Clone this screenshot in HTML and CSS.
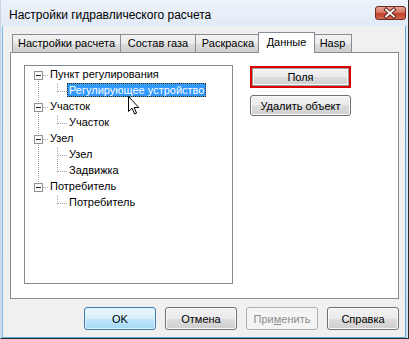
FILE: index.html
```html
<!DOCTYPE html>
<html>
<head>
<meta charset="utf-8">
<link rel="stylesheet" href="styles.css">
</head>
<body>
<svg class="defs" width="0" height="0">
  <defs>
    <symbol id="box" viewBox="0 0 19 16">
      <rect x="5.5" y="4.5" width="8" height="8" fill="#fdfdfd" stroke="#919191"/>
      <line x1="7" y1="8.5" x2="12" y2="8.5" stroke="#1a1a1a"/>
      <line x1="14" y1="8.5" x2="19" y2="8.5" stroke="#a0a0a0" stroke-dasharray="1 1"/>
    </symbol>
    <symbol id="up" viewBox="0 0 19 16">
      <line x1="9.5" y1="0" x2="9.5" y2="4" stroke="#a0a0a0" stroke-dasharray="1 1"/>
    </symbol>
    <symbol id="down" viewBox="0 0 19 16">
      <line x1="9.5" y1="14" x2="9.5" y2="16" stroke="#a0a0a0" stroke-dasharray="1 1"/>
    </symbol>
    <symbol id="pipe" viewBox="0 0 19 16">
      <line x1="9.5" y1="0" x2="9.5" y2="16" stroke="#a0a0a0" stroke-dasharray="1 1"/>
    </symbol>
    <symbol id="elbow" viewBox="0 0 19 16">
      <line x1="9.5" y1="0" x2="9.5" y2="9" stroke="#a0a0a0" stroke-dasharray="1 1"/>
      <line x1="10" y1="8.5" x2="19" y2="8.5" stroke="#a0a0a0" stroke-dasharray="1 1"/>
    </symbol>
    <symbol id="tee" viewBox="0 0 19 16">
      <line x1="9.5" y1="0" x2="9.5" y2="16" stroke="#a0a0a0" stroke-dasharray="1 1"/>
      <line x1="10" y1="8.5" x2="19" y2="8.5" stroke="#a0a0a0" stroke-dasharray="1 1"/>
    </symbol>
  </defs>
</svg>

<div class="window">
  <div class="titlebar">
    <span class="title">Настройки гидравлического расчета</span>
    <div class="close">
      <svg width="31" height="14" viewBox="0 0 31 14">
        <path d="M11.5 3.5 L19.5 10.5 M19.5 3.5 L11.5 10.5" stroke="#5a1e16" stroke-width="4" stroke-linecap="square"/>
        <path d="M11.5 3.5 L19.5 10.5 M19.5 3.5 L11.5 10.5" stroke="#ffffff" stroke-width="2" stroke-linecap="square"/>
      </svg>
    </div>
  </div>

  <div class="client">
    <div class="tabs">
      <div class="tab t1">Настройки расчета</div>
      <div class="tab t2">Состав газа</div>
      <div class="tab t3">Раскраска</div>
      <div class="tab active t4">Данные</div>
      <div class="tab t5">Hasp</div>
    </div>
    <div class="pane">
      <div class="tree">
        <div class="row">
          <svg class="cell"><use href="#box"/><use href="#down"/></svg>
          <span class="label">Пункт регулирования</span>
        </div>
        <div class="row">
          <svg class="cell"><use href="#pipe"/></svg>
          <svg class="cell"><use href="#elbow"/></svg>
          <span class="label selected">Регулирующее устройство</span>
        </div>
        <div class="row">
          <svg class="cell"><use href="#box"/><use href="#up"/><use href="#down"/></svg>
          <span class="label">Участок</span>
        </div>
        <div class="row">
          <svg class="cell"><use href="#pipe"/></svg>
          <svg class="cell"><use href="#elbow"/></svg>
          <span class="label">Участок</span>
        </div>
        <div class="row">
          <svg class="cell"><use href="#box"/><use href="#up"/><use href="#down"/></svg>
          <span class="label">Узел</span>
        </div>
        <div class="row">
          <svg class="cell"><use href="#pipe"/></svg>
          <svg class="cell"><use href="#tee"/></svg>
          <span class="label">Узел</span>
        </div>
        <div class="row">
          <svg class="cell"><use href="#pipe"/></svg>
          <svg class="cell"><use href="#elbow"/></svg>
          <span class="label">Задвижка</span>
        </div>
        <div class="row">
          <svg class="cell"><use href="#box"/><use href="#up"/></svg>
          <span class="label">Потребитель</span>
        </div>
        <div class="row">
          <svg class="cell"></svg>
          <svg class="cell"><use href="#elbow"/></svg>
          <span class="label">Потребитель</span>
        </div>
        <svg class="cursor" width="12" height="19" viewBox="0 0 12 19">
          <path d="M0.5 0.5 L0.5 15.5 L4 12.2 L6.6 18 L8.6 17.1 L6.1 11.5 L10.8 11.5 Z" fill="#fff" stroke="#000" stroke-linejoin="miter"/>
        </svg>
      </div>
      <div class="side">
        <button class="btn marked">Поля</button>
        <button class="btn">Удалить объект</button>
      </div>
    </div>
    <div class="actions">
      <button class="btn big default">OK</button>
      <button class="btn big">Отмена</button>
      <button class="btn big disabled">При<u>м</u>енить</button>
      <button class="btn big">Справка</button>
    </div>
  </div>
</div>
</body>
</html>
```
FILE: styles.css
```css
html, body {
  margin: 0;
  padding: 0;
  width: 409px;
  height: 339px;
  overflow: hidden;
  background: #ffffff;
}

.defs {
  position: absolute;
  width: 0;
  height: 0;
}

.window {
  box-sizing: border-box;
  width: 409px;
  height: 339px;
  display: flex;
  flex-direction: column;
  background: linear-gradient(#edf3fa, #dbe6f3 40px, #d3e0ef);
  border-right: 1px solid #2b2b2b;
  border-bottom: 1px solid #2b2b2b;
  border-left: 1px solid #c9d7e8;
  padding: 0 2px 0 1px;
  font-family: "Liberation Sans", Arial, sans-serif;
  font-size: 11px;
  color: #000;
}

.titlebar {
  height: 26px;
  flex: none;
  display: flex;
  align-items: flex-start;
}

.title {
  font-family: "Liberation Sans", Arial, sans-serif;
  font-size: 12px;
  line-height: 14px;
  margin: 8px 0 0 7px;
  color: #000;
}

.close {
  margin: 6px 0 0 auto;
  width: 31px;
  height: 14px;
  box-sizing: border-box;
  border: 1px solid #6d2a20;
  border-radius: 3px;
  background: linear-gradient(#e8a593, #d47865 45%, #c4402a 55%, #d0694f);
  display: flex;
}

.close svg {
  display: block;
  margin: -1px 0 0 -1px;
}

.client {
  flex: 1;
  background: #f0f0f0;
  border: 1px solid #5aa8dc;
  border-top: none;
  border-left-color: #7fb9e4;
  padding: 6px 6px 7px 7px;
  display: flex;
  flex-direction: column;
}

.tabs {
  display: flex;
  align-items: flex-end;
  height: 20px;
  padding-left: 2px;
  position: relative;
  z-index: 1;
}

.tab {
  box-sizing: border-box;
  height: 18px;
  line-height: 17px;
  border: 1px solid #898c95;
  border-bottom: none;
  margin-left: -1px;
  padding: 0 5px;
  background: linear-gradient(#f2f2f2, #ebebeb 50%, #dddddd 50%, #cfcfcf);
  white-space: nowrap;
  text-align: center;
}

.tab:first-child {
  margin-left: 0;
}

.t1 { width: 109px; }
.t2 { width: 76px; }
.t3 { width: 66px; }
.t5 { width: 39px; }

.tab.active {
  width: 57px;
  height: 21px;
  line-height: 18px;
  margin: 0 -2px -1px -3px;
  background: #ffffff;
  position: relative;
  z-index: 2;
}

.tab.active + .tab {
  margin-left: 0;
}

.pane {
  box-sizing: border-box;
  height: 247px;
  width: 389px;
  background: #ffffff;
  border: 1px solid #898c95;
  display: flex;
  align-items: flex-start;
  padding: 12px 0 0 13px;
  gap: 17px;
}

.tree {
  box-sizing: border-box;
  width: 209px;
  height: 219px;
  border: 1px solid #828790;
  background: #fff;
  padding: 1px 0 0 4px;
  position: relative;
}

.row {
  display: flex;
  height: 16px;
  align-items: flex-start;
}

.cell {
  width: 19px;
  height: 16px;
  flex: none;
  display: block;
}

.label {
  height: 15px;
  line-height: 15px;
  padding: 0 2px;
  box-sizing: border-box;
  white-space: nowrap;
  color: #000;
}

.label.selected {
  background: #3399ff;
  color: #fff;
  height: 14px;
  line-height: 13px;
  border: 1px dotted #3a2a10;
  padding: 0 1px;
}

.cursor {
  position: absolute;
  left: 103px;
  top: 30px;
}

.side {
  display: flex;
  flex-direction: column;
  gap: 7px;
  padding-top: 1px;
}

.btn {
  box-sizing: border-box;
  width: 101px;
  height: 21px;
  border: 1px solid #707070;
  border-radius: 3px;
  background: linear-gradient(#f2f2f2, #ebebeb 50%, #dddddd 50%, #cfcfcf);
  box-shadow: inset 0 0 0 1px #fbfbfb;
  font-family: "Liberation Sans", Arial, sans-serif;
  font-size: 11px;
  font-weight: normal;
  color: #000;
  padding: 0;
  margin: 0;
}

.btn.marked {
  border: 2px solid #dd0000;
  border-radius: 0;
  box-shadow: inset 0 0 0 1px #9a9a9a, inset 0 0 0 2px #fbfbfb;
  height: 22px;
}

.actions {
  display: flex;
  justify-content: flex-end;
  gap: 9px;
  margin-top: 8px;
}

.btn.big {
  width: 72px;
  height: 23px;
}

.btn.default {
  border-color: #3c7fb1;
  background: linear-gradient(#eaf6fd, #d9f0fc 50%, #bee6fd 50%, #a7d9f5);
  box-shadow: inset 0 0 0 1px #dff2fc;
}

.btn.disabled {
  border-color: #adb2b5;
  background: #f4f4f4;
  box-shadow: none;
  color: #8d8d8d;
}
```
